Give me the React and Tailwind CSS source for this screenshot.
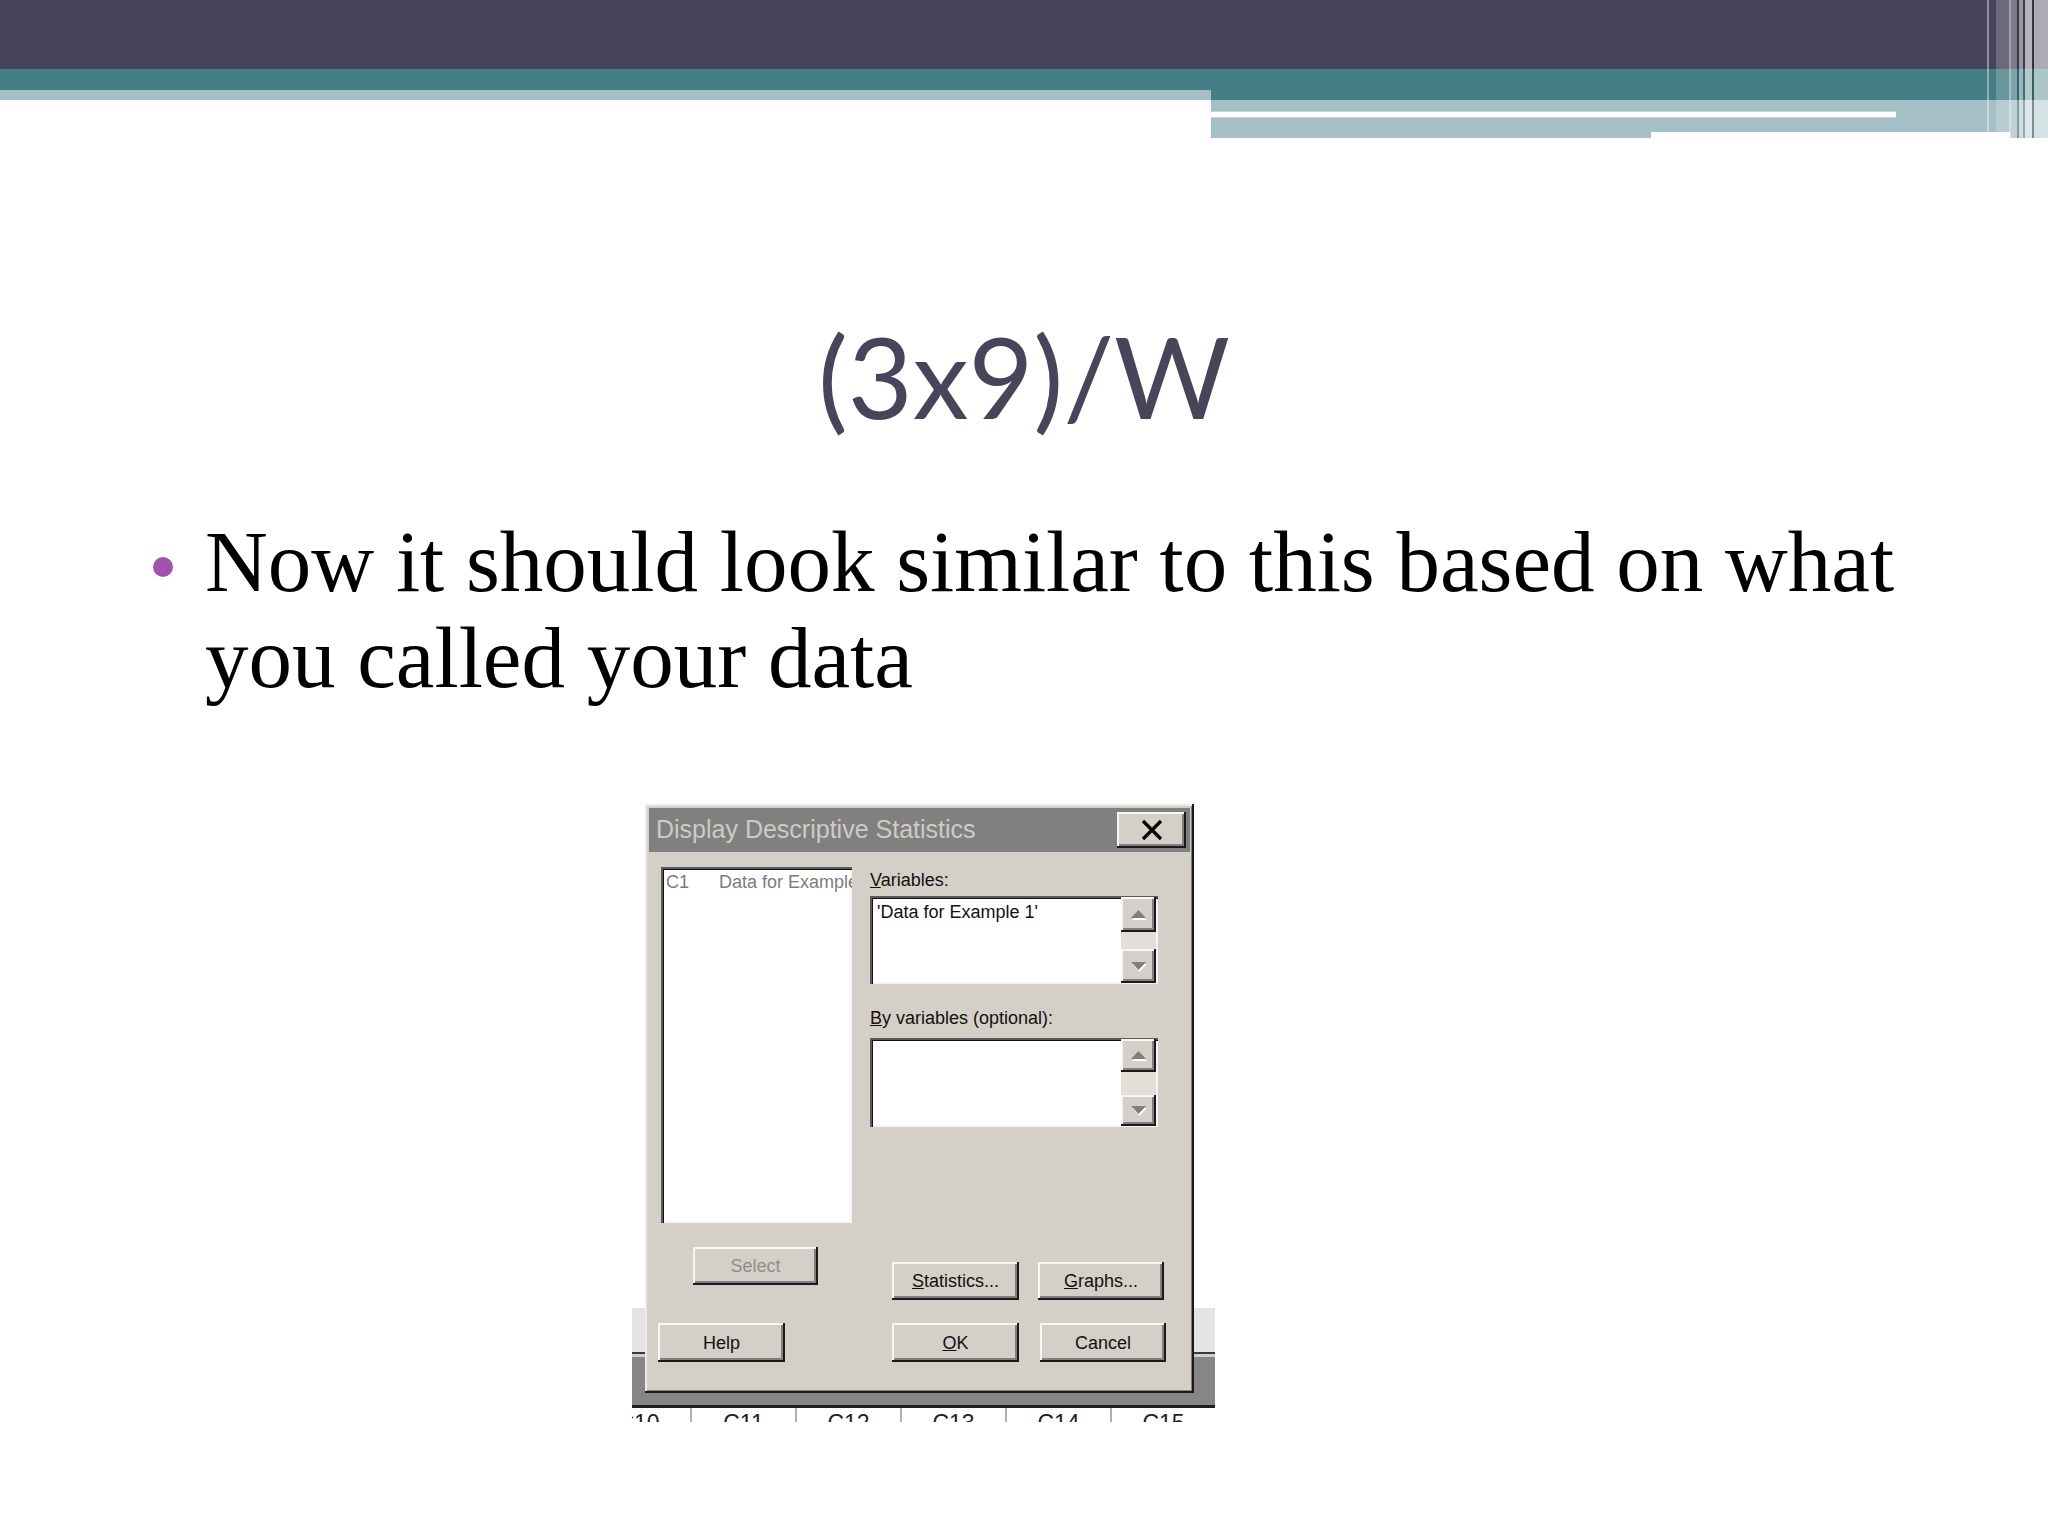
import React from "react";

const RAISED =
  "shadow-[inset_-2px_-2px_0_#1a1a1a,inset_2px_2px_0_#f6f6f6,inset_-4px_-4px_0_#808080]";
const SUNKEN =
  "shadow-[inset_2px_2px_0_#5a5a5a,inset_3px_3px_0_#111111,inset_-2px_-2px_0_#f4f4f4]";

function Arrow({ up }) {
  return (
    <svg width="18" height="11" viewBox="0 0 18 11">
      {up ? (
        <>
          <polygon points="1,10 16,10 8.5,2" fill="#ffffff" transform="translate(1,1)" />
          <polygon points="1,9 16,9 8.5,1" fill="#7e7e7e" />
        </>
      ) : (
        <>
          <polygon points="1,2 16,2 8.5,10" fill="#ffffff" transform="translate(1,1)" />
          <polygon points="1,1 16,1 8.5,9" fill="#7e7e7e" />
        </>
      )}
    </svg>
  );
}

function ScrollCol({ upH, downH }) {
  return (
    <div className="w-[35px] mr-[2px] flex flex-col py-[1px]">
      <div className={`${upH} flex items-center justify-center bg-[#d4d0c8] ${RAISED}`}>
        <Arrow up />
      </div>
      <div className="flex-1 bg-[#e2dfd9]" />
      <div className={`${downH} flex items-center justify-center bg-[#d4d0c8] ${RAISED}`}>
        <Arrow />
      </div>
    </div>
  );
}

function Btn({ size, children, muted }) {
  return (
    <div
      className={`${size} shrink-0 flex items-center justify-center bg-[#d4d0c8] ${RAISED} text-[18px] leading-none ${
        muted ? "text-[#8e8e8e]" : "text-[#111]"
      }`}
    >
      <span>{children}</span>
    </div>
  );
}

export default function App() {
  return (
    <div className="w-[2048px] h-[1536px] bg-white relative overflow-hidden flex flex-col">
      {/* header bands */}
      <div className="h-[138px] flex flex-col shrink-0">
        <div className="h-[69px] bg-[#46445a]" />
        <div className="h-[21px] bg-[#457e85]" />
        <div className="h-[10px] flex">
          <div className="w-[1211px] bg-[#a4c0c6]" />
          <div className="flex-1 bg-[#457e85]" />
        </div>
        <div className="h-[38px] flex">
          <div className="w-[1211px] bg-white" />
          <div className="flex-1 flex flex-col">
            <div className="h-[11px] bg-[#a4c0c6]" />
            <div className="h-[7px] flex">
              <div className="w-[685px] bg-white border-y border-[#c6d6d8]" />
              <div className="flex-1 bg-[#a4c0c6]" />
            </div>
            <div className="h-[14px] bg-[#a4c0c6]" />
            <div className="h-[6px] flex">
              <div className="w-[440px] bg-[#a4c0c6]" />
              <div className="w-[359px] bg-white" />
              <div className="flex-1 bg-[#a4c0c6]" />
            </div>
          </div>
        </div>
      </div>

      {/* right-hand vertical stripes over the header */}
      <div className="absolute top-0 right-0 w-[61px] h-[138px] flex items-start">
        <div className="w-[2px] h-[132px] bg-white/40" />
        <div className="w-[7px] h-[132px]" />
        <div className="w-[13px] h-[132px] bg-white/20" />
        <div className="w-[2px] h-[138px] bg-white/50" />
        <div className="w-[6px] h-[138px] bg-white/30" />
        <div className="w-[2px] h-[138px] bg-black/20" />
        <div className="w-[4px] h-[138px] bg-white/45" />
        <div className="w-[2px] h-[138px] bg-black/10" />
        <div className="w-[7px] h-[138px] bg-white/60" />
        <div className="w-[2px] h-[138px] bg-black/25" />
        <div className="w-[14px] h-[138px] bg-white/55" />
      </div>

      {/* title */}
      <div className="mt-[182px] h-[112px] text-center text-[112px] leading-none text-[#46455a] font-['Lato',sans-serif]">
        (3x9)/W
      </div>

      {/* bullet */}
      <div className="mt-[82px] flex pl-[153px]">
        <div className="w-[20px] h-[20px] rounded-full bg-[#a052ad] mt-[43px] shrink-0" />
        <p className="ml-[32px] w-[1740px] text-[87px] leading-[96px] text-black font-['Liberation_Serif',serif]">
          Now it should look similar to this based on what you called your data
        </p>
      </div>

      {/* dialog screenshot */}
      <div className="mt-[98px] ml-[632px] w-[583px] h-[618px] relative font-['Liberation_Sans',Arial,sans-serif]">
        {/* worksheet strip behind the dialog */}
        <div className="absolute left-0 top-[504px] w-[583px] h-[114px] flex flex-col overflow-hidden">
          <div className="h-[44px] bg-[#e4e4e4]" />
          <div className="h-[2px] bg-[#3a3a3a]" />
          <div className="h-[3px] bg-[#cfcfcf]" />
          <div className="h-[48px] bg-[#868686]" />
          <div className="h-[3px] bg-[#1e1e1e]" />
          <div className="h-[14px] bg-white flex ml-[-45px] overflow-hidden">
            {["C10", "C11", "C12", "C13", "C14", "C15"].map((c) => (
              <div
                key={c}
                className="w-[105px] shrink-0 border-r-2 border-[#b0b0b0] text-center text-[23px] leading-[23px] pt-[4px] text-[#222]"
              >
                {c}
              </div>
            ))}
          </div>
        </div>

        {/* the dialog */}
        <div className="relative ml-[13px] w-[549px] h-[589px] bg-[#d4d0c8] shadow-[inset_-2px_-2px_0_#1a1a1a,inset_2px_2px_0_#ececec,inset_-3px_-3px_0_#808080] flex flex-col pt-[4px]">
          {/* title bar */}
          <div className="mx-[4px] h-[44px] bg-[#808080] flex items-center justify-between pl-[7px] pr-[4px]">
            <span className="text-[25px] leading-none text-[#cfcbc3] pb-[2px]">
              Display Descriptive Statistics
            </span>
            <div className={`w-[69px] h-[36px] flex items-center justify-center bg-[#d4d0c8] ${RAISED}`}>
              <svg width="22" height="22" viewBox="0 0 22 22">
                <path d="M2 2 L20 20 M20 2 L2 20" stroke="#000" strokeWidth="3.2" />
              </svg>
            </div>
          </div>

          {/* body */}
          <div className="flex mt-[15px]">
            {/* left column */}
            <div className="ml-[16px] w-[191px] flex flex-col">
              <div className={`h-[356px] bg-white ${SUNKEN} overflow-hidden`}>
                <div className="flex pt-[6px] text-[18px] leading-[18px] text-[#7c7c7c] whitespace-nowrap">
                  <span className="ml-[5px] w-[53px] shrink-0">C1</span>
                  <span className="shrink-0">Data for Example 1</span>
                </div>
              </div>
              <div className="mt-[24px] ml-[32px]">
                <Btn size="w-[125px] h-[38px]" muted>
                  Select
                </Btn>
              </div>
            </div>

            {/* right column */}
            <div className="ml-[18px] w-[288px] flex flex-col">
              <div className="h-[26px] flex items-center text-[18px] leading-none text-[#111]">
                <span>
                  <span className="underline">V</span>ariables:
                </span>
              </div>
              <div className={`mt-[3px] h-[88px] bg-white ${SUNKEN} flex`}>
                <div className="flex-1 pl-[7px] pt-[6px] text-[18px] leading-[20px] text-[#111]">
                  'Data for Example 1'
                </div>
                <ScrollCol upH="h-[35px]" downH="h-[34px]" />
              </div>
              <div className="mt-[21px] h-[26px] flex items-center text-[18px] leading-none text-[#111]">
                <span>
                  <span className="underline">B</span>y variables (optional):
                </span>
              </div>
              <div className={`mt-[7px] h-[89px] bg-white ${SUNKEN} flex`}>
                <div className="flex-1" />
                <ScrollCol upH="h-[33px]" downH="h-[31px]" />
              </div>
              <div className="mt-[135px] ml-[22px] flex gap-[19px]">
                <Btn size="w-[127px] h-[38px]">
                  <span className="underline">S</span>tatistics...
                </Btn>
                <Btn size="w-[126px] h-[38px]">
                  <span className="underline">G</span>raphs...
                </Btn>
              </div>
            </div>
          </div>

          {/* bottom buttons */}
          <div className="mt-[23px] ml-[13px] flex">
            <Btn size="w-[127px] h-[39px]">Help</Btn>
            <div className="ml-[107px]">
              <Btn size="w-[127px] h-[39px]">
                <span className="underline">O</span>K
              </Btn>
            </div>
            <div className="ml-[21px]">
              <Btn size="w-[126px] h-[39px]">Cancel</Btn>
            </div>
          </div>
        </div>
      </div>
    </div>
  );
}
